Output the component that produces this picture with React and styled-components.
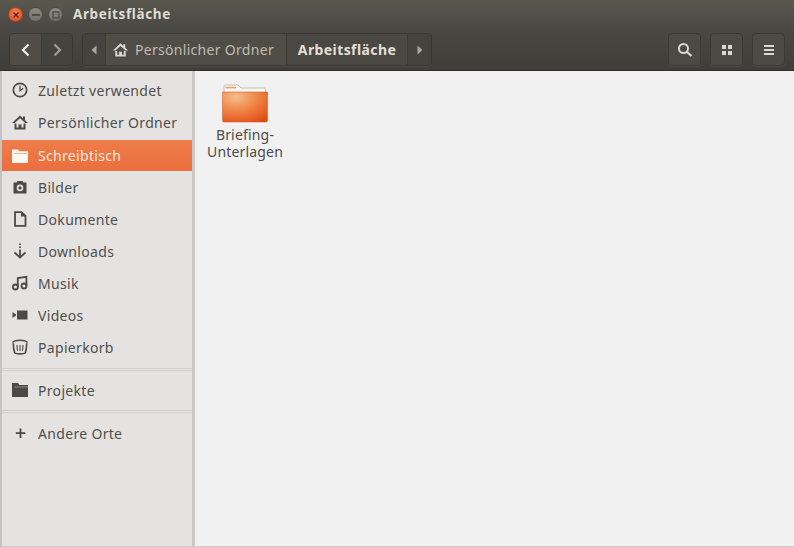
import React from "react";
import styled, { createGlobalStyle } from "styled-components";

const Global = createGlobalStyle`
  html, body { margin: 0; padding: 0; background: #3c3b37; }
  #root { width: 794px; height: 547px; overflow: hidden; }
  * { box-sizing: border-box; }
`;
const FONT = `"Noto Sans", "Open Sans", "Liberation Sans", sans-serif`;

const Window = styled.div`
  width: 794px; height: 547px; display: flex; flex-direction: column;
  font-family: ${FONT}; background: #f1f1f1;
`;
const Header = styled.header`
  height: 71px; flex: none; display: flex; flex-direction: column;
  background: linear-gradient(#5b584e 0, #52504a 14px, #4a4842 30px, #46443e 45px, #403e38 70px);
  border-bottom: 1px solid #2f2e2a;
`;
const TitleBar = styled.div`
  height: 31px; flex: none; display: flex; align-items: center; padding: 0 0 2px 8px;
`;
const Dots = styled.div`display: flex; gap: 5px; width: 65px; flex: none;`;
const Dot = styled.div`
  width: 15px; height: 15px; border-radius: 50%; display: flex; align-items: center; justify-content: center;
  background: ${p => p.$close ? "radial-gradient(circle at 50% 35%, #f37f55, #dd4d23)" : "linear-gradient(#8d8a81, #74716a)"};
  border: 1px solid ${p => p.$close ? "#a8401f" : "#4d4b45"};
`;
const Title = styled.div`
  color: #dfdbd2; font-weight: 700; font-size: 13.5px; letter-spacing: 0.62px; line-height: 1;
`;
const Toolbar = styled.div`
  flex: 1; display: flex; align-items: flex-start; padding: 2px 9px 0 9px;
`;
const Group = styled.div`
  display: flex; height: 33px; border-radius: 4px; overflow: hidden; flex: none;
  border: 1px solid #383732;
  box-shadow: 0 1px 0 rgba(255,255,255,0.07);
  margin-right: ${p => p.$mr || 0}px;
`;
const Segment = styled.div`
  width: ${p => p.$w}px;
  display: flex; align-items: center; justify-content: ${p => p.$start ? "flex-start" : "center"}; gap: 6px;
  padding-left: ${p => p.$start ? "6px" : "0"};
  background: ${p => p.$dark ? "#45433d" : p.$active ? "#4a4842" : "#4f4d46"};
  border-right: ${p => p.$last ? "none" : "1px solid #3b3a35"};
  color: ${p => p.$active ? "#e3dfd7" : "#bfbbb2"};
  font-size: 14px; font-weight: ${p => p.$active ? 700 : 400};
  letter-spacing: ${p => p.$active ? "0.4px" : "0.3px"};
  white-space: nowrap;
`;
const Spacer = styled.div`flex: 1;`;
const ToolButton = styled.div`
  width: 33px; height: 33px; flex: none; border-radius: 4px; display: flex; align-items: center; justify-content: center;
  background: #4c4a44; border: 1px solid #3a3934; margin-left: ${p => p.$ml || 0}px;
  box-shadow: 0 1px 0 rgba(255,255,255,0.07);
`;
const Body = styled.div`flex: 1; display: flex; min-height: 0;`;
const Sidebar = styled.nav`
  width: 195px; flex: none; background: #e5e3e1; padding-top: 3px;
  border-left: 2px solid #c6c4c2; border-right: 3px solid #cbc9c7; border-bottom: 1px solid #cbc9c7;
  display: flex; flex-direction: column;
`;
const Row = styled.div`
  height: ${p => p.$selected ? 31 : 32}px; margin-top: ${p => p.$selected ? 2 : 0}px;
  flex: none; display: flex; align-items: center; padding-left: 9px;
  color: ${p => p.$selected ? "#fbe9df" : "#4f4f4c"};
  font-size: 14px; letter-spacing: 0.32px;
  background: ${p => p.$selected ? "linear-gradient(#ef7c4a, #ea6f3e)" : "transparent"};
`;
const IconSlot = styled.span`
  width: 27px; flex: none; display: flex; align-items: center;
`;
const Divider = styled.div`
  height: 3px; flex: none; margin: ${p => p.$m};
  border-top: 1px solid #cfcdcb; border-bottom: 1px solid #cfcdcb; background: #e9e7e5;
`;
const Content = styled.main`
  flex: 1; background: #f1f1f1; padding: 13px 0 0 9px; border-bottom: 1px solid #d0cfcd;
`;
const Item = styled.div`
  width: 82px; display: flex; flex-direction: column; align-items: center;
  color: #4c4c4a; font-size: 14px; line-height: 17px; letter-spacing: 0.18px; text-align: center;
`;
const ItemLabel = styled.div`margin-top: 3px;`;

const C = "#4a4a47";

const Chevron = ({ left, color, w = 2.2 }) => (
  <svg width="12" height="14" viewBox="0 0 12 14">
    <path d={left ? "M8.5 1.5 3 7l5.5 5.5" : "M3.5 1.5 9 7l-5.5 5.5"} fill="none" stroke={color} strokeWidth={w} />
  </svg>
);
const Tri = ({ left }) => (
  <svg width="8" height="10" viewBox="0 0 8 10">
    <path d={left ? "M6.5 0.5v9L1.5 5z" : "M1.5 0.5v9L6.5 5z"} fill="#a9a69d" />
  </svg>
);
const Home = ({ color = C, size = 18 }) => (
  <svg width={size} height={size} viewBox="0 0 18 18">
    <path d="M9 2.5 1 10h2.6L9 5.2 14.4 10H17l-3-2.8V3.5h-2v1.9z" fill={color} />
    <path d="M4.500 10.500V15.500h9V10.500" fill="none" stroke={color} strokeWidth="2" />
    <path d="M7.500 15V11.500h3V15" fill={color} />
  </svg>
);
const Clock = () => (
  <svg width="18" height="18" viewBox="0 0 18 18">
    <circle cx="9" cy="9" r="6.7" fill="none" stroke={C} strokeWidth="1.7" />
    <path d="M9 4.800v4.900l3.200-2.400" fill="none" stroke={C} strokeWidth="1.300" />
  </svg>
);
const FolderWhite = () => (
  <svg width="18" height="18" viewBox="0 0 18 18">
    <path d="M1 2.500h6l1.500 1.700H17V16H1z" fill="#fff6ef" />
    <path d="M3 6h13v1H3z" fill="#eeb594" />
  </svg>
);
const Camera = () => (
  <svg width="18" height="18" viewBox="0 0 18 18">
    <path fillRule="evenodd" d="M2.500 4.500h3L6.500 3h5l1 1.500h3v11h-13zM9 6.600a3.300 3.300 0 1 0 0 6.600 3.300 3.300 0 0 0 0-6.600zM9 8.200a1.700 1.700 0 1 1 0 3.400 1.700 1.700 0 0 1 0-3.400z" fill={C} />
  </svg>
);
const Doc = () => (
  <svg width="18" height="18" viewBox="0 0 18 18">
    <path d="M4 2.200h6.500L14.500 6v9.800H4z" fill="none" stroke={C} strokeWidth="1.800" />
    <path d="M10 2.500V6.500h4.400z" fill={C} />
  </svg>
);
const Download = () => (
  <svg width="18" height="18" viewBox="0 0 18 18">
    <path d="M9 1.500v1.600M9 4.500v1.600M9 7.500v7" stroke={C} strokeWidth="1.800" fill="none" />
    <path d="M3.500 10.500 9 15.500l5.500-5" stroke={C} strokeWidth="1.800" fill="none" />
  </svg>
);
const Music = () => (
  <svg width="18" height="18" viewBox="0 0 18 18">
    <path d="M6.800 13V4l8.600-1.200V12" fill="none" stroke={C} strokeWidth="1.800" />
    <circle cx="4.400" cy="13" r="2.500" fill="none" stroke={C} strokeWidth="1.800" />
    <circle cx="13" cy="12" r="2.500" fill="none" stroke={C} strokeWidth="1.800" />
  </svg>
);
const Video = () => (
  <svg width="18" height="18" viewBox="0 0 18 18">
    <path d="M6 4.500h10.500v9H6z" fill={C} />
    <path d="M1.500 6 5 8.500v1L1.500 12z" fill={C} />
  </svg>
);
const Trash = () => (
  <svg width="18" height="18" viewBox="0 0 18 18">
    <path d="M1.500 4.600c2-3.100 13-3.100 15 0" fill="none" stroke={C} strokeWidth="1.500" />
    <path d="M2.300 5.200c0 3 .5 7 1.400 9.500 1.500 1.500 9.100 1.500 10.600 0 .9-2.500 1.400-6.500 1.400-9.500" fill="none" stroke={C} strokeWidth="1.600" />
    <path d="M6 7c0 2 .3 4 .6 5.800M9 7v6M12 7c0 2-.3 4-.6 5.800" fill="none" stroke={C} strokeWidth="1.100" />
  </svg>
);
const FolderDark = () => (
  <svg width="18" height="18" viewBox="0 0 18 18">
    <path d="M1 2h6l1.500 2H17v12H1z" fill={C} />
    <path d="M3 5.500h14v1H3z" fill="#8a8a86" />
  </svg>
);
const Plus = () => (
  <svg width="18" height="18" viewBox="0 0 18 18">
    <path d="M9.500 4.500v9.500M4.800 9.200h9.500" stroke={C} strokeWidth="1.800" fill="none" />
  </svg>
);
const Search = () => (
  <svg width="16" height="16" viewBox="0 0 16 16">
    <circle cx="6.500" cy="6.500" r="4.500" fill="none" stroke="#dcd9d1" strokeWidth="2" />
    <path d="M10 10l4.500 4" stroke="#dcd9d1" strokeWidth="2.200" fill="none" />
  </svg>
);
const Grid = () => (
  <svg width="12" height="12" viewBox="0 0 12 12" fill="#dcd9d1">
    <path d="M1 1h4v4H1zM7 1h4v4H7zM1 7h4v4H1zM7 7h4v4H7z" />
  </svg>
);
const Menu = () => (
  <svg width="12" height="12" viewBox="0 0 12 12" fill="#dcd9d1">
    <path d="M1 1h10v2H1zM1 5h10v2H1zM1 9h10v2H1z" />
  </svg>
);
const BigFolder = () => (
  <svg width="46" height="39" viewBox="0 0 46 39">
    <defs>
      <radialGradient id="bf" cx="0.3" cy="0.15" r="1">
        <stop offset="0" stopColor="#f6bd8a" />
        <stop offset="0.55" stopColor="#ee7d3d" />
        <stop offset="1" stopColor="#df4a14" />
      </radialGradient>
    </defs>
    <path d="M2 2c0-.5.5-1 1-1h13l3 3h23.500c.5 0 1 .5 1 1v5H2z" fill="#f8f6f1" stroke="#b5b1a8" strokeWidth="0.800" />
    <rect x="3.500" y="2.800" width="10.500" height="1.600" fill="#efa35f" />
    <path d="M.5 8h45v28.500c0 .8-.7 1.500-1.500 1.500H2c-.8 0-1.500-.7-1.500-1.500z" fill="url(#bf)" stroke="#c9562a" strokeWidth="0.500" />
  </svg>
);

const places = [
  ["Zuletzt verwendet", <Clock />],
  ["Persönlicher Ordner", <Home />],
  ["Schreibtisch", <FolderWhite />, true],
  ["Bilder", <Camera />],
  ["Dokumente", <Doc />],
  ["Downloads", <Download />],
  ["Musik", <Music />],
  ["Videos", <Video />],
  ["Papierkorb", <Trash />],
];

export default function App() {
  return (
    <Window>
      <Global />
      <Header>
        <TitleBar>
          <Dots>
            <Dot $close>
              <svg width="6" height="6" viewBox="0 0 6 6"><path d="M.5.5l5 5M5.500.5l-5 5" stroke="#5a2412" strokeWidth="1.200" /></svg>
            </Dot>
            <Dot>
              <svg width="8" height="2" viewBox="0 0 8 2"><path d="M0 1h8" stroke="#3f3d38" strokeWidth="1.500" /></svg>
            </Dot>
            <Dot>
              <svg width="8" height="8" viewBox="0 0 8 8"><rect x="1" y="1" width="6" height="6" fill="none" stroke="#4a4842" strokeWidth="1.200" /></svg>
            </Dot>
          </Dots>
          <Title>Arbeitsfläche</Title>
        </TitleBar>
        <Toolbar>
          <Group $mr={9}>
            <Segment $w={32}><Chevron left color="#f1eee7" /></Segment>
            <Segment $w={30} $last $dark><Chevron color="#a09d94" /></Segment>
          </Group>
          <Group>
            <Segment $w={23} $dark><Tri left /></Segment>
            <Segment $w={181} $start><Home color="#dcd9d1" size={17} />Persönlicher Ordner</Segment>
            <Segment $w={121} $active>Arbeitsfläche</Segment>
            <Segment $w={23} $last $dark><Tri /></Segment>
          </Group>
          <Spacer />
          <ToolButton><Search /></ToolButton>
          <ToolButton $ml={9}><Grid /></ToolButton>
          <ToolButton $ml={9}><Menu /></ToolButton>
        </Toolbar>
      </Header>
      <Body>
        <Sidebar>
          {places.map(([label, icon, sel]) => (
            <Row key={label} $selected={sel}><IconSlot>{icon}</IconSlot>{label}</Row>
          ))}
          <Divider $m="5px 0 3px" />
          <Row><IconSlot><FolderDark /></IconSlot>Projekte</Row>
          <Divider $m="4px 0 4px" />
          <Row><IconSlot><Plus /></IconSlot>Andere Orte</Row>
        </Sidebar>
        <Content>
          <Item>
            <BigFolder />
            <ItemLabel>Briefing-<br />Unterlagen</ItemLabel>
          </Item>
        </Content>
      </Body>
    </Window>
  );
}
